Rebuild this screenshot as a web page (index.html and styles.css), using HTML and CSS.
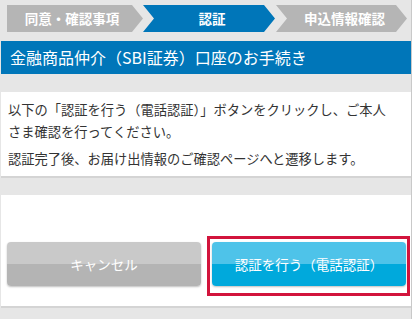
FILE: index.html
```html
<!DOCTYPE html>
<html lang="ja">
<head>
    <meta charset="UTF-8">
    <meta name="viewport" content="width=device-width, initial-scale=1.0">
    <title>認証</title>
    <link rel="stylesheet" href="styles.css">
</head>
<body>
<div class="page">
    <ol class="steps">
        <li class="step first">同意・確認事項</li>
        <li class="step current">認証</li>
        <li class="step">申込情報確認</li>
    </ol>

    <h1 class="title">金融商品仲介（SBI証券）口座のお手続き</h1>

    <div class="panel info">
        <p>以下の「認証を行う（電話認証）」ボタンをクリックし、ご本人さま確認を行ってください。</p>
        <p>認証完了後、お届け出情報のご確認ページへと遷移します。</p>
    </div>

    <div class="panel actions">
        <button class="btn btn-cancel">キャンセル</button>
        <div class="focus-box">
            <button class="btn btn-auth">認証を行う（電話認証）</button>
        </div>
    </div>
</div>
</body>
</html>
```

FILE: styles.css
```css
body {
    margin: 0;
    background-color: #e6e6e6;
    font-family: "Noto Sans CJK JP", "Noto Sans", sans-serif;
    color: #333;
}

.page {
    height: 319px;
    border-right: 1px solid #c9c9c9;
    box-sizing: border-box;
    overflow: hidden;
}

/* step bar */
.steps {
    display: flex;
    list-style: none;
    margin: 0;
    padding: 5px 0 0 7px;
}
.step {
    height: 27px;
    line-height: 27px;
    width: 131px;
    margin-right: 2px;
    background-color: #b5b5b5;
    color: #fff;
    font-size: 13.5px;
    font-weight: bold;
    text-align: center;
    padding-left: 6px;
    box-sizing: border-box;
    clip-path: polygon(0 0, calc(100% - 11px) 0, 100% 50%, calc(100% - 11px) 100%, 0 100%, 11px 50%);
}
.step.first {
    width: 136px;
    margin-right: 0;
    padding-left: 0;
    padding-right: 6px;
    clip-path: polygon(0 0, calc(100% - 11px) 0, 100% 50%, calc(100% - 11px) 100%, 0 100%);
}
.step.current {
    width: 132px;
    margin-right: 1px;
    background-color: #0076b9;
}

.title {
    margin: 9px 0 0 1px;
    height: 33px;
    line-height: 33px;
    padding-left: 9px;
    background-color: #0076b9;
    color: #fff;
    font-size: 16px;
    font-weight: normal;
}

.panel {
    background-color: #fff;
    border-bottom: 2px solid #d4d4d4;
    margin-left: 1px;
}

.info {
    margin-top: 18px;
    padding: 7px 16px 6px 7px;
    font-size: 13.25px;
    line-height: 22px;
}
.info p {
    margin: 0 0 5px;
}
.info p:last-child {
    margin-bottom: 0;
}

.actions {
    margin-top: 17px;
    display: flex;
    align-items: flex-start;
    padding: 41px 0 10px 6px;
}

.btn {
    height: 44px;
    border: none;
    border-radius: 4px;
    color: #fff;
    font-family: inherit;
    font-size: 13.5px;
    cursor: pointer;
    box-shadow: 0 1px 2px rgba(0,0,0,0.25);
}
.btn-cancel {
    width: 194px;
    margin-top: 6px;
    background: linear-gradient(#c9c9c9 50%, #b4b4b4 50%);
}
.btn-auth {
    width: 194px;
    background: linear-gradient(#4ec3e9 50%, #00a9dc 50%);
}

.focus-box {
    margin-left: 6px;
    border: 3px solid #d2143c;
    padding: 3px 1px 7px 2px;
    line-height: 0;
}
```
